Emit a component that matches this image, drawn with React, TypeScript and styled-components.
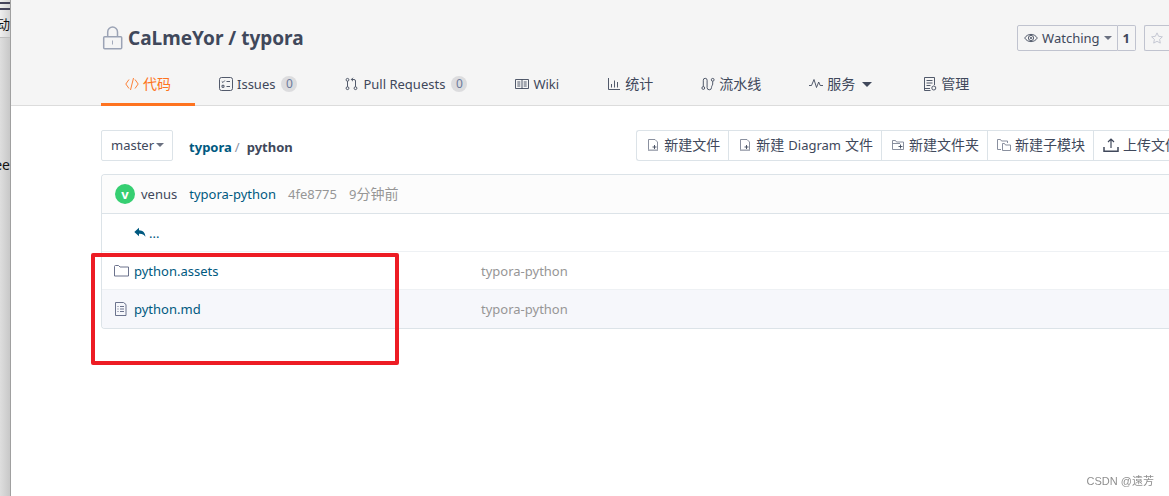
import React from "react";
import styled, { createGlobalStyle, css } from "styled-components";

const ink = "#40485b";
const link = "#005980";
const line = "#dce3e8";
const muted = "#8c92a4";

const GlobalStyle = createGlobalStyle`
  *, *::before, *::after { box-sizing: border-box; }
  body {
    margin: 0;
    background: #fff;
    color: ${ink};
    font: 13px/20px "Noto Sans", "Noto Sans CJK SC", sans-serif;
    overflow: hidden;
  }
  a { color: inherit; text-decoration: none; }
  button { font: inherit; color: inherit; cursor: pointer; }
  h1, p { margin: 0; }
`;

const Screen = styled.div`
  display: flex;
  min-height: 100vh;
  overflow: hidden;
`;

const BackWindow = styled.aside`
  flex: none;
  display: flex;
  flex-direction: column;
  width: 11px;
  overflow: hidden;
  border-right: 1px solid #a0a0a0;
  background: linear-gradient(90deg, #dedede, #c8c8c8);
  color: #111;
`;

const BackBar = styled.div`
  display: flex;
  flex-direction: column;
  align-items: flex-end;
  height: 38px;
  padding-top: 2px;
  border-bottom: 1px solid #bdbdbd;
  background: linear-gradient(90deg, #efefef, #d4d4d4);
`;

const Bars = styled.span`
  flex: none;
  width: 10px;
  height: 8px;
  margin-bottom: 4px;
  border: solid #44445a;
  border-width: 2px 0;
`;

const BackText = styled.p`
  display: flex;
  justify-content: flex-end;
  margin-top: 117px;
  font-size: 14px;
`;

const Page = styled.main`
  flex: 1;
  min-width: 0;
  overflow: hidden;
`;

const Header = styled.header`
  padding: 24px 0 0 90px;
  background: #f5f5f5;
  border-bottom: 1px solid #dcdcdc;
`;

const TitleRow = styled.div`
  display: flex;
  align-items: center;
  justify-content: space-between;
  height: 28px;
`;

const Title = styled.h1`
  display: flex;
  align-items: center;
  gap: 5px;
  padding-left: 1px;
  font-size: 19px;
  line-height: 26px;
  font-weight: 700;
`;

const Actions = styled.div`
  display: flex;
  gap: 8px;
`;

const Split = styled.div`
  display: flex;
`;

const WatchButton = styled.button<{ $part: "left" | "right" | "cut" }>`
  display: flex;
  align-items: center;
  gap: 4px;
  height: 26px;
  padding: 0 5px 0 6px;
  border: 1px solid #c0c3cf;
  border-radius: 2px;
  background: transparent;
  ${p => p.$part === "left" && css`border-radius: 2px 0 0 2px;`}
  ${p => p.$part === "right" && css`
    padding: 0 5px;
    border-left: 0;
    border-radius: 0 2px 2px 0;
    font-weight: 700;
  `}
  ${p => p.$part === "cut" && css`
    padding: 0 6px;
    border-right: 0;
    border-radius: 2px 0 0 2px;
    color: #c0c3cf;
  `}
`;

const Tabs = styled.nav`
  display: flex;
  height: 41px;
  margin-top: 12px;
`;

const Tab = styled.a<{ $active?: boolean }>`
  display: flex;
  align-items: center;
  gap: 4px;
  height: 42px;
  padding: 0 24px 2px;
  box-shadow: ${p => (p.$active ? "inset 0 -3px #fe7320" : "none")};
  color: ${p => (p.$active ? "#fe7320" : ink)};
  white-space: nowrap;
`;

const Cjk = styled.span`
  font-size: 14px;
`;

const Badge = styled.span`
  min-width: 16px;
  height: 16px;
  margin-left: 2px;
  border-radius: 8px;
  background: #dcdcde;
  color: #6c7a9c;
  font-size: 12px;
  line-height: 16px;
  text-align: center;
`;

const Caret = styled.span<{ $big?: boolean }>`
  flex: none;
  border: solid transparent;
  border-width: ${p => (p.$big ? "5px 5px 0" : "4px 4px 0")};
  border-top-color: ${p => (p.$big ? ink : "#6a7080")};
  margin: ${p => (p.$big ? "0 3px" : "0")};
`;

const Content = styled.section`
  padding: 24px 0 0 90px;
`;

const Toolbar = styled.div`
  display: flex;
  align-items: center;
  justify-content: space-between;
`;

const PathGroup = styled.div`
  display: flex;
  align-items: center;
  gap: 16px;
`;

const BranchButton = styled.button`
  display: flex;
  align-items: center;
  gap: 2px;
  height: 31px;
  padding: 0 8px 2px 9px;
  border: 1px solid ${line};
  border-radius: 2px;
  background: #fff;
`;

const Crumbs = styled.nav`
  display: flex;
  gap: 3px;
  padding-top: 3px;
  font-weight: 700;

  a { color: ${link}; }
  i { margin-right: 4px; font-style: normal; font-weight: 400; color: ${muted}; }
`;

const FileActions = styled.div`
  display: flex;
  margin-right: -18px;
`;

const FileButton = styled.button`
  display: flex;
  align-items: center;
  gap: 4px;
  height: 31px;
  padding: 0 8px 2px 9px;
  border: 1px solid ${line};
  border-right-width: 0;
  background: #fff;
  white-space: nowrap;
  &:first-child { border-radius: 3px 0 0 3px; }
`;

const FilesArea = styled.div`
  position: relative;
  margin-top: 13px;
`;

const Panel = styled.div`
  border: 1px solid ${line};
  border-right: 0;
  border-radius: 4px 0 0 4px;
  overflow: hidden;
`;

const Commit = styled.div`
  display: flex;
  align-items: center;
  gap: 12px;
  height: 39px;
  padding-left: 13px;
  background: #fcfcfc;
  border-bottom: 1px solid ${line};
`;

const Author = styled.a`
  display: flex;
  align-items: center;
  gap: 6px;
`;

const Avatar = styled.span`
  width: 20px;
  height: 20px;
  border-radius: 50%;
  background: #36cf72;
  color: #fff;
  font-weight: 700;
  text-align: center;
`;

const CommitLink = styled.a`
  color: ${link};
`;

const Faint = styled.span`
  color: #969696;
`;

const FileTable = styled.table`
  width: 100%;
  border-spacing: 0;
  table-layout: fixed;
`;

const Row = styled.tr<{ $shade?: boolean }>`
  height: 38px;
  background: ${p => (p.$shade ? "#f6f7fb" : "#fff")};
  td { border-bottom: 1px solid #eef1f4; }
  &:last-child td { border-bottom: 0; }
`;

const NameCell = styled.td<{ $up?: boolean }>`
  width: 379px;
  padding: 0 0 0 ${p => (p.$up ? "32px" : "12px")};
  a { display: flex; align-items: center; gap: ${p => (p.$up ? "3px" : "4px")}; color: ${link}; }
`;

const MessageCell = styled.td`
  padding: 0;
  color: #969696;
`;

const Marker = styled.div`
  position: absolute;
  left: -10px;
  top: 79px;
  width: 308px;
  height: 112px;
  border: 4px solid #ed1c24;
  border-radius: 2px;
  pointer-events: none;
`;

const Watermark = styled.p`
  position: fixed;
  right: 15px;
  bottom: 6px;
  color: #8f8f8f;
  font: 11px/18px "Liberation Sans", "Noto Sans CJK SC", sans-serif;
`;

const Svg = styled.svg`
  flex: none;
  fill: none;
  stroke: currentColor;
  stroke-width: 0.9;
`;

const Icon = ({ w = 14, h = 14, children }: { w?: number; h?: number; children: React.ReactNode }) => (
  <Svg width={w} height={h} viewBox={`0 0 ${w} ${h}`} aria-hidden="true">{children}</Svg>
);

const LockIcon = () => (
  <Svg width="21" height="24" viewBox="0 0 21 24" color="#9ba3b5" aria-hidden="true">
    <rect x="1.7" y="10.7" width="18" height="12" rx="1" strokeWidth="1.5" />
    <path d="M5.7 10.5V6a4.9 4.9 0 0 1 9.8 0v4.5" strokeWidth="1.5" />
    <path d="M10.5 14.5v4" />
  </Svg>
);

const NewFileIcon = () => (
  <Icon>
    <path d="M2.5 12.5v-11h6.500l2.500 2.500v8.500" stroke="#7d8394" />
    <path d="M2 12.200h10" stroke="#a9adb8" strokeWidth="1.600" />
    <path d="M8.500 7v4M6.500 9h4" />
  </Icon>
);

const tabs = [
  { label: "代码", cjk: true, active: true, icon: <Icon><path d="M4 2.5.8 7 4 11.5M10 2.5 13.2 7 10 11.5M8.5 1 5.5 13" /></Icon> },
  { label: "Issues", count: 0, icon: <Icon><rect x=".5" y=".5" width="13" height="13" rx="2" /><path d="m2.8 4.5 1.2 1 1.8-2M7.5 4.5H11M7.5 9.5H11M3 8.3h2v2H3z" /></Icon> },
  { label: "Pull Requests", count: 0, icon: <Icon><circle cx="2.5" cy="2.8" r="1.4" /><circle cx="2.5" cy="11.2" r="1.4" /><circle cx="10.5" cy="11.2" r="1.4" /><path d="M2.5 4.2v5.6M10.5 9.8V4a1.5 1.5 0 0 0-1.5-1.5H6.5M8 .8 6.3 2.5 8 4.2" /></Icon> },
  { label: "Wiki", icon: <Icon><path d="M.5 2.5h13v9H.5zM7 2.5v9.5M2.3 5h3M2.3 7h3M2.3 9h3M8.7 5h3M8.7 7h3M8.7 9h3" /></Icon> },
  { label: "统计", cjk: true, icon: <Icon><path d="M1.5 1v11.5H13M4.5 10.5V7M7.5 10.5v-7M10.5 10.5V5" /></Icon> },
  { label: "流水线", cjk: true, icon: <Icon><circle cx="2.3" cy="11" r="1.4" /><circle cx="11.7" cy="2.8" r="1.4" /><path d="M2.3 9.5V3.2a1.9 1.9 0 0 1 3.8 0v7.400a2.200 2.200 0 0 0 4.400 0c0-2 1.200-2 1.200-3.600V4.300" /></Icon> },
  { label: "服务", cjk: true, caret: true, icon: <Icon><path d="M0 8.5h2.5L5 2.500l2.500 8 2.200-5.500 1.500 3.500H14" /></Icon> },
  { label: "管理", cjk: true, icon: <Icon><path d="M7.500 13.500H1.500V.5h10V8M3.500 3.500h6M3.500 6h6M3.500 8.500h4M1.500 11.500H7" /><circle cx="10.800" cy="11" r="2" /></Icon> },
];

export default function App() {
  return (
    <>
      <GlobalStyle />
      <Screen>
        <BackWindow>
          <BackBar><Bars />动</BackBar>
          <BackText>ee</BackText>
        </BackWindow>
        <Page>
          <Header>
            <TitleRow>
              <Title><LockIcon /><a href="#repo">CaLmeYor / typora</a></Title>
              <Actions>
                <Split>
                  <WatchButton $part="left">
                    <Icon><path d="M.7 7C3.5 2.2 10.5 2.2 13.3 7 10.5 11.8 3.5 11.8.7 7z" /><circle cx="7" cy="7" r="2.6" /><circle cx="7" cy="7" r=".7" /></Icon>
                    Watching<Caret />
                  </WatchButton>
                  <WatchButton $part="right">1</WatchButton>
                </Split>
                <WatchButton $part="cut" aria-label="Star">
                  <Icon w={12} h={12}><path d="m6 .9 1.6 3.4 3.8.5-2.8 2.6.7 3.7L6 9.3l-3.3 1.8.7-3.7L.6 4.8l3.8-.5z" /></Icon>
                </WatchButton>
              </Actions>
            </TitleRow>
            <Tabs>
              {tabs.map(t => (
                <Tab key={t.label} href="#tab" $active={t.active}>
                  {t.icon}
                  {t.cjk ? <Cjk>{t.label}</Cjk> : <span>{t.label}</span>}
                  {t.count !== undefined && <Badge>{t.count}</Badge>}
                  {t.caret && <Caret $big />}
                </Tab>
              ))}
            </Tabs>
          </Header>
          <Content>
            <Toolbar>
              <PathGroup>
                <BranchButton>master<Caret /></BranchButton>
                <Crumbs><a href="#typora">typora</a><i>/</i><span>python</span></Crumbs>
              </PathGroup>
              <FileActions>
                <FileButton><NewFileIcon /><Cjk>新建文件</Cjk></FileButton>
                <FileButton><NewFileIcon /><Cjk>新建</Cjk>Diagram<Cjk>文件</Cjk></FileButton>
                <FileButton>
                  <Icon><path d="M1.500 11.500v-9h3l1 1.500h7v7.500zM1.500 5.500H9" stroke="#7d8394" /><path d="M9.500 6.500v4M7.500 8.500h4" /></Icon>
                  <Cjk>新建文件夹</Cjk>
                </FileButton>
                <FileButton>
                  <Icon><path d="M4 11.500H.5v-10h3l1 1.500h6v2M5.500 12.500v-7h2l1 1.500h5v5.500z" stroke="#7d8394" /></Icon>
                  <Cjk>新建子模块</Cjk>
                </FileButton>
                <FileButton>
                  <Icon w={16} h={16}><path d="M1 10v4.200h14V10" strokeWidth="1.500" /><path d="M8 11V2M5 5l3-3 3 3" strokeWidth="1.200" /></Icon>
                  <Cjk>上传文件</Cjk>
                </FileButton>
              </FileActions>
            </Toolbar>
            <FilesArea>
              <Panel>
                <Commit>
                  <Author href="#venus"><Avatar>v</Avatar>venus</Author>
                  <CommitLink href="#commit">typora-python</CommitLink>
                  <Faint>4fe8775</Faint>
                  <Faint>9<Cjk>分钟前</Cjk></Faint>
                </Commit>
                <FileTable>
                  <tbody>
                    <Row>
                      <NameCell $up>
                        <a href="#up">
                          <Icon w={12} h={12}><path d="M5 .8.3 5 5 9.2V6.8c3-.2 5 .7 6.4 3C11.2 5.600 9 3.400 5 3.200z" fill="currentColor" stroke="none" /></Icon>
                          ...
                        </a>
                      </NameCell>
                      <MessageCell />
                    </Row>
                    <Row>
                      <NameCell>
                        <a href="#assets">
                          <Icon w={16}><path d="M.5 2.500a1 1 0 0 1 1-1h3l1.500 1.500h8.500v9h-14z" stroke="#5b6380" /></Icon>
                          python.assets
                        </a>
                      </NameCell>
                      <MessageCell>typora-python</MessageCell>
                    </Row>
                    <Row $shade>
                      <NameCell>
                        <a href="#md">
                          <Icon w={16}><path d="M1.500.5h8l2.500 2v11h-10.500zM3.500 4.500h1M6 4.500h4M3.500 7h1M6 7h4M3.500 9.500h1M6 9.500h4" stroke="#5b6380" /></Icon>
                          python.md
                        </a>
                      </NameCell>
                      <MessageCell>typora-python</MessageCell>
                    </Row>
                  </tbody>
                </FileTable>
              </Panel>
              <Marker />
            </FilesArea>
          </Content>
        </Page>
      </Screen>
      <Watermark>CSDN @遠芳</Watermark>
    </>
  );
}
